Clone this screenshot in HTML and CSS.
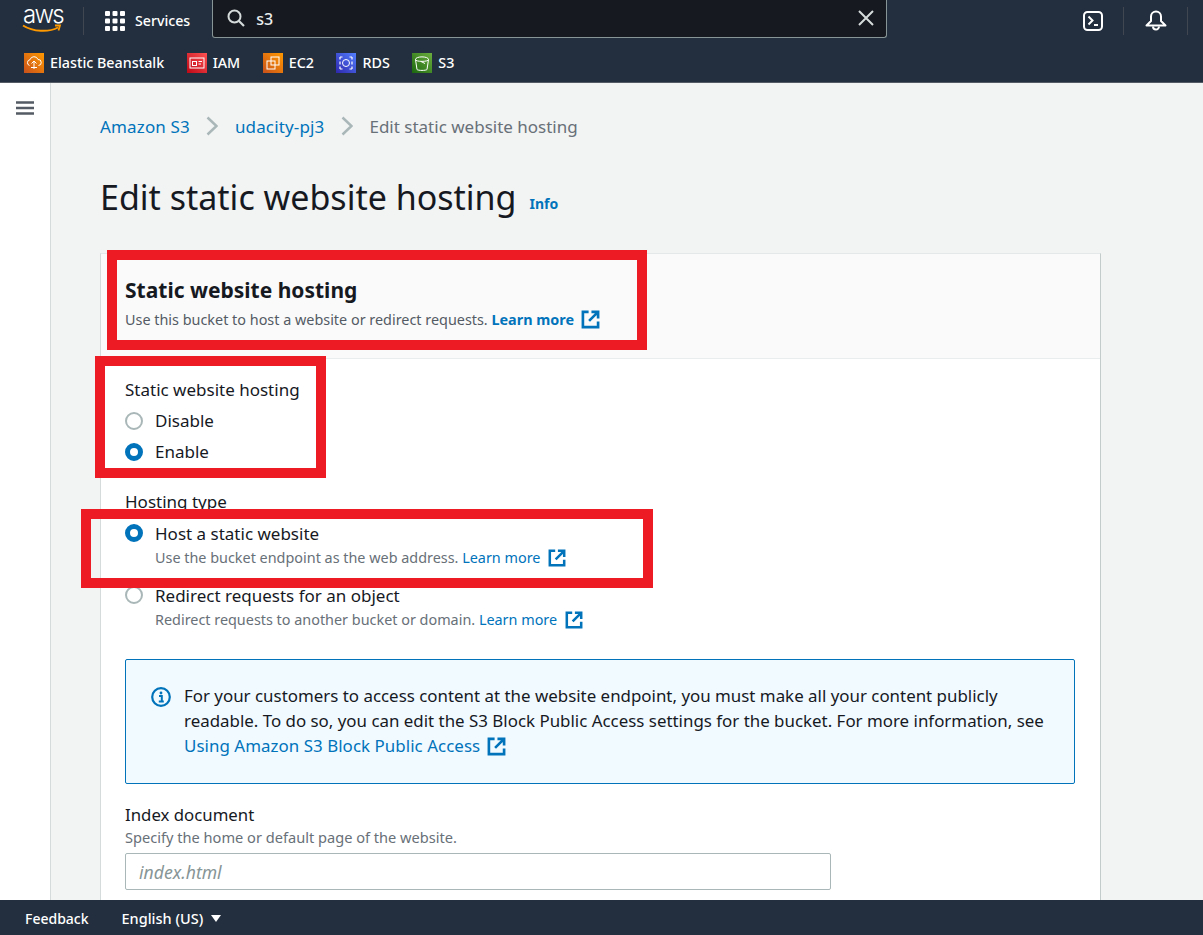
FILE: index.html
```html
<!DOCTYPE html>
<html lang="en">
<head>
<meta charset="utf-8">
<title>Edit static website hosting</title>
<link rel="stylesheet" href="styles.css">
</head>
<body>
<svg class="defs" width="0" height="0">
  <symbol id="ext" viewBox="0 0 20 20"><path d="M8 2H2v16h16v-6" fill="none" stroke="currentColor" stroke-width="2.800"/><path d="M11 2h7v7M18 2L8.500 11.500" fill="none" stroke="currentColor" stroke-width="2.800"/></symbol>
</svg>
<header class="top">
  <div class="bar">
    <div class="logo">
      <span class="logo-text">aws</span>
      <svg class="smile" viewBox="0 0 40 10" width="40" height="10"><path d="M1 1.500C11 8 27 8.500 36 3.500" fill="none" stroke="#f90" stroke-width="2"/><path d="M33 1.500l5 0-1.500 5" fill="none" stroke="#f90" stroke-width="1.800"/></svg>
    </div>
    <span class="vrule"></span>
    <svg class="grid" viewBox="0 0 20 20" width="20" height="20"><g fill="#fff"><rect x="0" y="0" width="5" height="5" rx="1"/><rect x="7.500" y="0" width="5" height="5" rx="1"/><rect x="15" y="0" width="5" height="5" rx="1"/><rect x="0" y="7.500" width="5" height="5" rx="1"/><rect x="7.500" y="7.500" width="5" height="5" rx="1"/><rect x="15" y="7.500" width="5" height="5" rx="1"/><rect x="0" y="15" width="5" height="5" rx="1"/><rect x="7.500" y="15" width="5" height="5" rx="1"/><rect x="15" y="15" width="5" height="5" rx="1"/></g></svg>
    <span class="services">Services</span>
    <div class="search">
      <svg viewBox="0 0 18 18" width="18" height="18"><circle cx="7.500" cy="7.500" r="6" fill="none" stroke="#d5dbdb" stroke-width="2"/><path d="M12 12l5 5" stroke="#d5dbdb" stroke-width="2.200"/></svg>
      <span class="search-q">s3</span>
      <svg class="clear" viewBox="0 0 16 16" width="16" height="16"><path d="M1 1l14 14M15 1L1 15" stroke="#d5dbdb" stroke-width="2"/></svg>
    </div>
    <svg class="ico-shell" viewBox="0 0 20 20" width="20" height="20"><rect x="1" y="1" width="18" height="18" rx="3.500" fill="none" stroke="#fff" stroke-width="2"/><path d="M5.500 5.500l4 4-4 4" fill="none" stroke="#fff" stroke-width="2"/><path d="M11 14h4" stroke="#fff" stroke-width="2"/></svg>
    <span class="vrule v2"></span>
    <svg class="ico-bell" viewBox="0 0 22 22" width="22" height="22"><path d="M1.500 15.500L6 11V6.500a5 5 0 0 1 10 0V11l4.500 4.500z" fill="none" stroke="#fff" stroke-width="2" stroke-linejoin="round"/><path d="M8 16.500a3 3 0 0 0 6 0" fill="none" stroke="#fff" stroke-width="2"/></svg>
    <span class="vrule v3"></span>
  </div>
  <nav class="favs">
    <a class="fav"><span class="svc orange"><svg viewBox="0 0 20 20"><path d="M5.500 12.500a3 3 0 0 1 .5-5.800 4.200 4.200 0 0 1 8-.2 3 3 0 0 1 .5 6M10 8v8M7.500 10.500L10 8l2.500 2.500M7 14.500h6" fill="none" stroke="#fff" stroke-width="1"/></svg></span>Elastic Beanstalk</a>
    <a class="fav"><span class="svc red"><svg viewBox="0 0 20 20"><rect x="3" y="5" width="14" height="10" fill="none" stroke="#fff" stroke-width="1"/><rect x="5.500" y="8.500" width="4" height="4" fill="none" stroke="#fff" stroke-width="1"/><path d="M11.500 8.500h3.500M11.500 11h2.500" stroke="#fff" stroke-width="1"/></svg></span>IAM</a>
    <a class="fav"><span class="svc orange"><svg viewBox="0 0 20 20"><rect x="8" y="4" width="8" height="8" fill="none" stroke="#fff" stroke-width="1"/><rect x="4" y="8" width="8" height="8" fill="none" stroke="#fff" stroke-width="1"/></svg></span>EC2</a>
    <a class="fav"><span class="svc blue"><svg viewBox="0 0 20 20"><ellipse cx="10" cy="10" rx="3.500" ry="3.500" fill="none" stroke="#fff" stroke-width="1"/><path d="M4 4h2.500M4 4v2.500M16 4h-2.500M16 4v2.500M4 16h2.500M4 16v-2.500M16 16h-2.500M16 16v-2.500M4 8.500v3M16 8.500v3" fill="none" stroke="#fff" stroke-width="1.200"/></svg></span>RDS</a>
    <a class="fav"><span class="svc green"><svg viewBox="0 0 20 20"><path d="M3.500 6.500c0-3.500 13-3.500 13 0l-1.500 10c-1 1.200-9 1.200-10 0z" fill="none" stroke="#fff" stroke-width="1"/><path d="M3.500 6.500c0 2.500 13 2.500 13 0M9 8.500l4 2" fill="none" stroke="#fff" stroke-width="1"/></svg></span>S3</a>
  </nav>
</header>

<div class="body">
  <aside class="side">
    <svg viewBox="0 0 18 14" width="18" height="14"><path d="M0 1.500h18M0 7h18M0 12.500h18" stroke="#545b64" stroke-width="2.500"/></svg>
  </aside>
  <main class="content">
    <ol class="crumbs">
      <li><a class="link">Amazon S3</a></li>
      <li class="chev"><svg viewBox="0 0 12 20" width="12" height="20"><path d="M1.500 1.500l9 8.500-9 8.500" fill="none" stroke="#aab7b8" stroke-width="2.500"/></svg></li>
      <li><a class="link">udacity-pj3</a></li>
      <li class="chev"><svg viewBox="0 0 12 20" width="12" height="20"><path d="M1.500 1.500l9 8.500-9 8.500" fill="none" stroke="#aab7b8" stroke-width="2.500"/></svg></li>
      <li class="crumb-cur">Edit static website hosting</li>
    </ol>
    <div class="title-row">
      <h1>Edit static website hosting</h1>
      <a class="info">Info</a>
    </div>
    <section class="card">
      <div class="card-head">
        <h2>Static website hosting</h2>
        <p class="muted">Use this bucket to host a website or redirect requests. <a class="link strong">Learn more</a><svg class="ext big"><use href="#ext"/></svg></p>
      </div>
      <div class="card-body">
        <div class="label first">Static website hosting</div>
        <div class="radio"><span class="dot"></span>Disable</div>
        <div class="radio"><span class="dot on"></span>Enable</div>

        <div class="label second">Hosting type</div>
        <div class="radio tall"><span class="dot on"></span>Host a static website</div>
        <p class="desc">Use the bucket endpoint as the web address. <a class="link">Learn more</a><svg class="ext"><use href="#ext"/></svg></p>
        <div class="radio tall gap"><span class="dot"></span>Redirect requests for an object</div>
        <p class="desc">Redirect requests to another bucket or domain. <a class="link">Learn more</a><svg class="ext"><use href="#ext"/></svg></p>

        <div class="alert">
          <svg class="alert-ico" viewBox="0 0 20 20" width="20" height="20"><circle cx="10" cy="10" r="8.800" fill="none" stroke="#0073bb" stroke-width="2.200"/><circle cx="10" cy="6" r="1.400" fill="#0073bb"/><path d="M8 9h2.800v5M7.800 14.500h5" fill="none" stroke="#0073bb" stroke-width="2"/></svg>
          <p>For your customers to access content at the website endpoint, you must make all your content publicly readable. To do so, you can edit the S3 Block Public Access settings for the bucket. For more information, see <a class="link wide">Using Amazon S3 Block Public Access</a><svg class="ext big"><use href="#ext"/></svg></p>
        </div>

        <div class="label third">Index document</div>
        <p class="hint">Specify the home or default page of the website.</p>
        <div class="input">index.html</div>
      </div>
    </section>
  </main>
</div>

<footer class="foot">
  <span>Feedback</span>
  <span class="lang">English (US)<i class="caret"></i></span>
</footer>

<div class="mark m1"></div>
<div class="mark m2"></div>
<div class="mark m3"></div>
</body>
</html>
```

FILE: styles.css
```css
* { box-sizing: border-box; }
html, body { margin: 0; height: 935px; }
body {
  position: relative;
  overflow: hidden;
  display: flex;
  flex-direction: column;
  font-family: "Noto Sans", "Open Sans", sans-serif;
  color: #16191f;
  background: #fff;
  font-size: 17px;
}
p, h1, h2, ol { margin: 0; padding: 0; }
.defs { position: absolute; }

/* top navigation */
.top { flex: none; height: 83px; background: #232f3e; border-bottom: 1px solid #545b64; color: #fff; }
.bar { height: 41px; display: flex; align-items: center; padding-left: 23px; }
.logo { width: 40px; height: 36px; position: relative; flex: none; }
.logo-text { display: block; font: 300 24px/24px "Inter", sans-serif; letter-spacing: -1.800px; color: #fff; }
.smile { position: absolute; left: -1px; top: 21px; }
.vrule { width: 1px; height: 28px; background: #414750; flex: none; margin-left: 20px; }
.grid { margin-left: 21px; flex: none; }
.services { margin-left: 10px; font-size: 14.200px; font-weight: 500; }
.search {
  margin-left: 22px; width: 675px; height: 38px; flex: none; margin-top: -4px;
  display: flex; align-items: center; padding: 0 12px 0 14px;
  background: #16191f; border: 1px solid #879596; border-top: 0; border-radius: 0 0 3px 3px;
  color: #eaeded;
}
.search-q { margin-left: 11px; font-size: 16px; flex: 1; font-weight: 500; padding-top: 2px; }
.ico-shell { margin-left: 196px; flex: none; }
.v2 { margin-left: 20px; }
.ico-bell { margin-left: 21px; flex: none; }
.v3 { margin-left: 20px; }

.favs { height: 41px; padding: 2px 0 0 24px; display: flex; align-items: center; gap: 22.500px; }
.fav { display: flex; align-items: center; font-size: 14.300px; font-weight: 500; }
.svc { width: 20px; height: 20px; margin-right: 6px; display: block; flex: none; }
.svc svg { display: block; width: 20px; height: 20px; }
.orange { background: linear-gradient(45deg, #c8511b, #f90); }
.red { background: linear-gradient(45deg, #bd0816, #ff5252); }
.blue { background: linear-gradient(45deg, #2e27ad, #527fff); }
.green { background: linear-gradient(45deg, #1b660f, #6cae3e); }

/* frame */
.body { flex: 1; min-height: 0; display: flex; overflow: hidden; }
.side { width: 51px; flex: none; background: #fff; border-right: 1px solid #d5dbdb; padding: 18px 0 0 16px; }
.side svg { display: block; }
.content { flex: 1; background: #f2f3f3; padding: 0 102px 0 49px; min-width: 0; }

.link { color: #0073bb; text-decoration: none; }
.strong { font-weight: 700; }
.wide { letter-spacing: .05px; }

.crumbs { list-style: none; display: flex; align-items: center; height: 86px; font-size: 17px; }
.crumbs .link { letter-spacing: .15px; }
.chev { margin: 0 16.500px; height: 20px; }
.chev svg { display: block; }
.crumb-cur { color: #687078; }

.title-row { display: flex; align-items: flex-start; height: 84px; padding-top: 2px; }
h1 { font-size: 34px; font-weight: 400; line-height: 52px; }
.info { margin: 23px 0 0 13px; color: #0073bb; font-size: 14px; line-height: 20px; font-weight: 700; }

.card { background: #fff; border: 1px solid #e4e8e8; border-right-color: #c4cbcb; border-left-color: #d5dbdb; border-bottom: 0; }
.card-head { height: 105px; background: #fafafa; border-bottom: 1px solid #eaeded; padding: 20px 24px 0; }
h2 { font-size: 21px; font-weight: 700; line-height: 32px; }
.muted { font-size: 14.400px; line-height: 28px; color: #545b64; }
.ext { width: 18px; height: 18px; margin-left: 8px; vertical-align: -4px; color: #0073bb; }
.ext.big { width: 19px; height: 19px; margin-left: 7px; vertical-align: -4px; }

.card-body { padding: 0 25px 60px 24px; }
.label { font-size: 17px; line-height: 24px; }
.first { margin-top: 19px; margin-bottom: 3px; }
.radio { display: flex; align-items: center; height: 31px; font-size: 17px; }
.radio.tall { height: 24px; }
.radio.gap { margin-top: 13px; }
.dot { width: 18px; height: 18px; border-radius: 50%; border: 2px solid #aab7b8; margin-right: 12px; flex: none; background: #fff; }
.dot.on { border: 5px solid #0073bb; }
.second { margin-top: 23px; margin-bottom: 7px; }
.desc { margin-top: 1px; font-size: 14.400px; line-height: 24px; color: #687078; padding-left: 30px; }

.alert {
  margin-top: 27px; height: 125px; display: flex; gap: 13px;
  background: #f1faff; border: 1px solid #0073bb; border-radius: 2px; padding: 23px 24px 0 25px;
}
.alert-ico { flex: none; margin-top: 4px; }
.alert p { font-size: 16.900px; line-height: 25px; }

.third { margin-top: 19px; font-size: 16.800px; }
.hint { font-size: 14.600px; line-height: 20px; color: #687078; }
.input {
  margin-top: 6px; width: 706px; height: 37px; border: 1px solid #aab7b8; border-radius: 2px;
  padding: 0 13px; display: flex; align-items: center; font-style: italic; font-size: 17.600px; color: #879596;
}

/* footer */
.foot { flex: none; height: 35px; background: #232f3e; color: #fff; display: flex; align-items: center; padding: 1px 0 0 25px; gap: 33px; font-size: 14px; font-weight: 500; }
.lang { display: flex; align-items: center; font-size: 14.500px; }
.caret { width: 0; height: 0; margin-left: 8px; border: 5px solid transparent; border-top: 7px solid #fff; border-bottom: 0; }

/* screenshot annotations lying over the page */
.mark { position: absolute; border: 10px solid #ed1c24; pointer-events: none; }
.m1 { left: 107px; top: 250px; width: 540px; height: 100px; }
.m2 { left: 95px; top: 356px; width: 231px; height: 122px; }
.m3 { left: 81px; top: 509px; width: 572px; height: 79px; }
```
